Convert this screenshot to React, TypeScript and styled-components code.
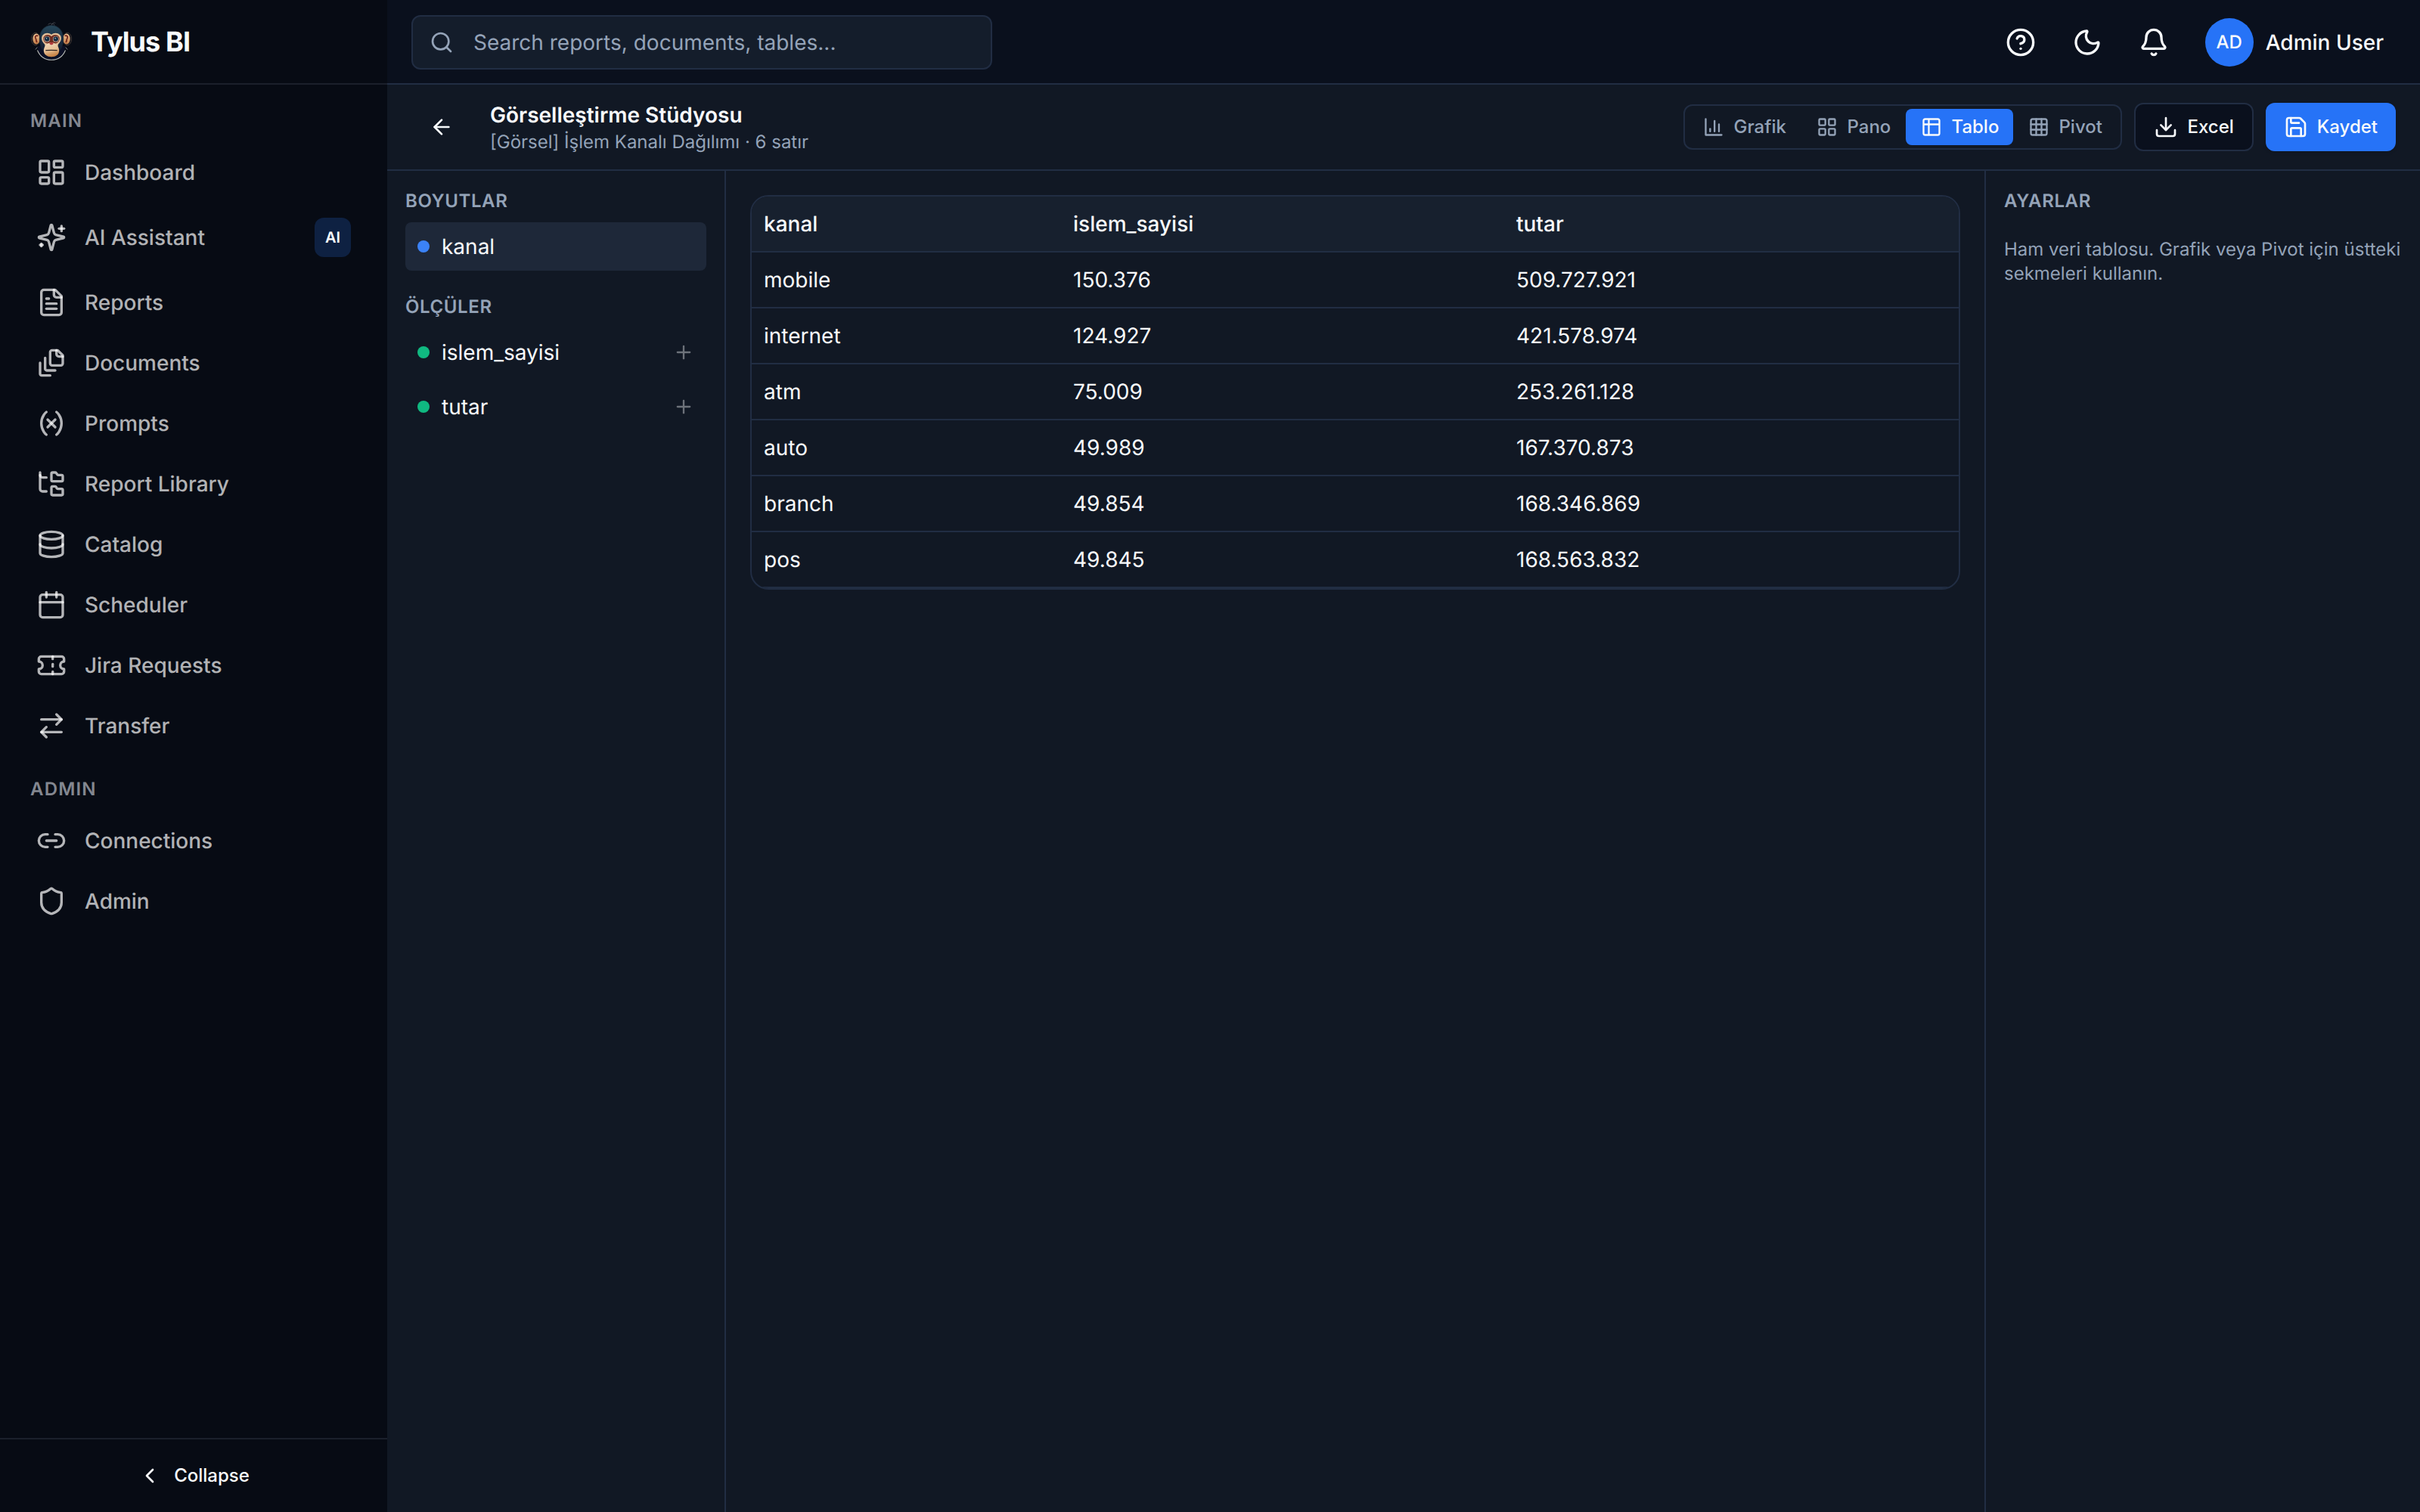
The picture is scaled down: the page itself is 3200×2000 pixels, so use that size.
import React from "react";
import styled, { createGlobalStyle, css } from "styled-components";
import {
  LayoutDashboard, Variable, FolderTree, Database, Calendar,
  Ticket, ArrowRightLeft, Link2, Shield, ChevronLeft, Search, CircleHelp, Moon, Bell,
  ArrowLeft, LayoutGrid, Table2, Grid3x3, Download, Save, Plus,
} from "lucide-react";

const c = {
  side: "#070b14",
  head: "#0a101d",
  main: "#111824",
  border: "#212d43",
  muted: "#94a3b8",
  text: "#f8fafc",
  blue: "#2673f7",
};

const Global = createGlobalStyle`
  *, *::before, *::after { box-sizing: border-box; }
  body { margin: 0; background: ${c.main}; color: ${c.text}; font: 400 28px/40px Inter, "Noto Sans", sans-serif; -webkit-font-smoothing: antialiased; text-rendering: geometricPrecision; }
  svg { flex-shrink: 0; display: block; }
  button { font: inherit; color: inherit; border: 0; background: none; padding: 0; }
`;

const Shell = styled.div`display: flex; width: 3200px; height: 2000px; overflow: hidden; background: ${c.main};`;

const Sidebar = styled.aside`
  width: 512px; flex-shrink: 0; display: flex; flex-direction: column; background: ${c.side};
`;
const Brand = styled.div`
  height: 112px; padding: 0 40px; display: flex; align-items: center; gap: 24px;
  border-bottom: 2px solid #1b202b;
`;
const BrandName = styled.span`font-size: 36px; font-weight: 700; letter-spacing: -0.025em; line-height: 56px;`;
const Nav = styled.nav`flex: 1; padding: 24px 16px 0;`;
const NavLabel = styled.div<{ $later?: boolean }>`
  padding: 0 24px; margin: ${(p) => (p.$later ? "28px 0 12px" : "8px 0 12px")};
  font-size: 24px; line-height: 32px; font-weight: 600; letter-spacing: 0.05em; color: #838790;
`;
const NavItem = styled.a`
  display: flex; align-items: center; gap: 24px; padding: 20px 32px; font-weight: 500; color: rgba(255,255,255,0.7);
`;
const NavBadge = styled.span`
  margin-left: auto; width: 48px; height: 52px; border-radius: 12px; background: #0e2142; color: ${c.text};
  display: grid; place-items: center; font-size: 20px; font-weight: 600;
`;
const Collapse = styled.button`
  height: 98px; border-top: 2px solid #1b202b; display: flex; align-items: center; justify-content: center; gap: 16px;
  font-size: 24px; font-weight: 500;
`;

const Content = styled.div`flex: 1; min-width: 0; display: flex; flex-direction: column;`;
const TopBar = styled.header`
  height: 112px; padding: 2px 48px 0 32px; display: flex; align-items: center; justify-content: space-between;
  background: ${c.head}; border-bottom: 2px solid ${c.border};
`;
const SearchBox = styled.div`
  width: 768px; height: 72px; padding: 0 22px; display: flex; align-items: center; gap: 26px;
  border: 2px solid ${c.border}; border-radius: 12px; background: #141d2b; color: ${c.muted};
`;
const Actions = styled.div`display: flex; align-items: center; gap: 48px;`;
const User = styled.div`display: flex; align-items: center; gap: 16px; font-weight: 500;`;
const Avatar = styled.span`
  width: 64px; height: 64px; border-radius: 50%; background: ${c.blue}; display: grid; place-items: center; font-size: 24px;
`;

const StudioBar = styled.div`
  height: 114px; padding: 0 32px; display: flex; align-items: center; border-bottom: 2px solid ${c.border};
`;
const Back = styled.button`width: 80px; height: 64px; display: grid; place-items: center; margin-right: 24px;`;
const Titles = styled.div`flex: 1; padding-top: 2px;`;
const Title = styled.h1`margin: 0 0 1px; font-size: 28px; line-height: 36px; font-weight: 600;`;
const Subtitle = styled.p`margin: 0; font-size: 24px; line-height: 33px; color: ${c.muted};`;
const Segmented = styled.div`
  display: flex; padding: 4px; border: 2px solid ${c.border}; border-radius: 12px;
`;
const Segment = styled.button<{ $active?: boolean; $width: number }>`
  width: ${(p) => p.$width}px; height: 48px; padding-left: 20px; display: flex; align-items: center; gap: 12px;
  border-radius: 8px; font-size: 24px; font-weight: 500; color: ${c.muted};
  ${(p) => p.$active && css`background: ${c.blue}; color: ${c.text};`}
`;
const Button = styled.button<{ $primary?: boolean }>`
  height: 64px; margin-left: 16px; padding: 0 24px; display: flex; align-items: center; gap: 12px; border-radius: 12px;
  font-size: 24px; font-weight: 500; border: 2px solid ${c.border}; background: ${c.head};
  ${(p) => p.$primary && css`border: 0; background: ${c.blue}; box-shadow: 0 2px 4px rgba(0,0,0,0.12);`}
`;

const Workspace = styled.div`flex: 1; display: flex; min-height: 0;`;
const Fields = styled.section`width: 448px; padding: 24px; border-right: 2px solid ${c.border};`;
const PanelLabel = styled.h2`
  margin: 0; font-size: 24px; line-height: 32px; font-weight: 600; letter-spacing: 0.025em; color: ${c.muted};
`;
const FieldGroup = styled.div`display: grid; gap: 8px; margin: 12px 0 32px;`;
const Field = styled.div<{ $used?: boolean }>`
  height: 64px; padding: 0 16px; border-radius: 8px; display: flex; align-items: center; gap: 16px;
  background: ${(p) => (p.$used ? "#1e2839" : "transparent")};
  svg { margin-left: auto; opacity: 0.4; }
`;
const Dot = styled.span<{ $color: string }>`width: 16px; height: 16px; border-radius: 50%; background: ${(p) => p.$color};`;

const Stage = styled.main`flex: 1; padding: 32px;`;
const TableCard = styled.div`border: 2px solid ${c.border}; border-radius: 24px; overflow: hidden;`;
const Table = styled.table`width: 100%; border-collapse: separate; border-spacing: 0; table-layout: fixed;`;
const Col = styled.col<{ $width?: number }>`width: ${(p) => (p.$width ? `${p.$width}px` : "auto")};`;
const Th = styled.th`
  height: 74px; padding: 0 16px; text-align: left; font-weight: 500; background: #17202e; border-bottom: 2px solid ${c.border};
`;
const Td = styled.td`height: 74px; padding: 0 16px; border-bottom: 2px solid ${c.border};`;

const Settings = styled.section`width: 576px; padding: 24px; border-left: 2px solid ${c.border};`;
const Hint = styled.p`margin: 32px 0 0; font-size: 24px; line-height: 32px; color: ${c.muted}; white-space: nowrap;`;

const Logo = () => (
  <svg width="56" height="56" viewBox="0 0 56 56">
    <defs>
      <linearGradient id="ear" x1="0" y1="0" x2="0" y2="1"><stop offset="0" stopColor="#eec294" /><stop offset="1" stopColor="#c07a45" /></linearGradient>
      <linearGradient id="muzzle" x1="0" y1="0" x2="0.3" y2="1"><stop offset="0" stopColor="#f3dfc4" /><stop offset="0.6" stopColor="#e6c096" /><stop offset="1" stopColor="#c98548" /></linearGradient>
      <linearGradient id="fur" x1="0" y1="0" x2="0" y2="1"><stop offset="0" stopColor="#27485b" /><stop offset="1" stopColor="#10182c" /></linearGradient>
    </defs>
    <path d="M10 34C10 46 18 52 28 52S46 46 46 34Z" fill="#0b1026" />
    <path d="M6.800 38.500l2.500-3M49.200 38.500l-2.500-3" fill="none" stroke="#8b8f90" strokeWidth="0.9" />
    <path d="M9.500 39.500C13 48 20 52.300 28 52.300S43 48 46.500 39.500" fill="none" stroke="#b9bcb8" strokeWidth="1.1" />
    <ellipse cx="7" cy="24.500" rx="5.600" ry="8.300" fill="#12141c" stroke="#54463e" strokeWidth="0.7" />
    <ellipse cx="49" cy="24.500" rx="5.600" ry="8.300" fill="#12141c" stroke="#54463e" strokeWidth="0.7" />
    <ellipse cx="8" cy="24.500" rx="4.700" ry="7" fill="url(#ear)" />
    <ellipse cx="48" cy="24.500" rx="4.700" ry="7" fill="url(#ear)" />
    <path d="M10.500 20.500c-3.500-1-4.500 1-3.500 3 1.500 1.500 0 3.500 2 5.500M45.500 20.500c3.500-1 4.500 1 3.500 3-1.500 1.500 0 3.500-2 5.500" fill="none" stroke="#6e2118" strokeWidth="1.700" />
    <path d="M28 6.500C18.500 6.500 12.300 14 12.300 24c0 8 2.700 15 7.700 18h16c5-3 7.700-10 7.700-18C43.700 14 37.500 6.500 28 6.500Z" fill="url(#fur)" stroke="#182432" strokeWidth="0.8" />
    <path d="M23.500 5.500c2-2 4-2 5.500-.2 0-2.300 3-3.300 4.500-1.300M27.500 6.500l2.500-2.500 2.500 2.500" fill="none" stroke="#4a4e56" strokeWidth="0.8" />
    <path d="M28 18.800C25 15.500 18.500 16 16 20c-2 4-.5 8 3 11.500L20 36h16l1-4.500c3.500-3.500 5-7.500 3-11.500C37.500 16 31 15.500 28 18.800Z" fill="#e3bf98" />
    <path d="M28 21.200c-3-3.200-8.300-3-10.300.8-1.500 4 1 8 5.300 8.500h10c4.300-.5 6.800-4.500 5.300-8.500-2-3.800-7.300-4-10.300-.8Z" fill="#6f2c20" />
    <circle cx="22.200" cy="24.700" r="3.900" fill="#c9b09c" /><circle cx="33.800" cy="24.700" r="3.900" fill="#c9b09c" />
    <circle cx="22.200" cy="24.500" r="3.200" fill="#142d43" /><circle cx="33.800" cy="24.500" r="3.200" fill="#142d43" />
    <circle cx="21.500" cy="23.800" r="0.7" fill="#dbe5ea" /><circle cx="33.100" cy="23.800" r="0.7" fill="#dbe5ea" />
    <path d="M28 29c-6.500 1-10.200 6-10.200 11 0 5.200 4.700 8.200 10.200 8.200s10.200-3 10.200-8.200C38.200 35 34.500 30 28 29Z" fill="url(#muzzle)" />
    <path d="M25.300 30c0-1.500 5.400-1.500 5.400 0S29 32.300 28 32.300s-2.700-.8-2.700-2.300Z" fill="#b23a3c" />
    <path d="M20.800 39.700q7.200-.6 14.400 0" fill="none" stroke="#2b211f" strokeWidth="1.200" strokeLinecap="round" />
  </svg>
);

type IconProps = { size: number };
const strokeIcon = (...paths: string[]) => ({ size }: IconProps) => (
  <svg width={size} height={size} viewBox="0 0 24 24" fill="none" stroke="currentColor" strokeWidth="2" strokeLinecap="round" strokeLinejoin="round">
    {paths.map((d) => <path key={d} d={d} />)}
  </svg>
);
const SparkleStar = strokeIcon(
  "M9.937 15.5A2 2 0 0 0 8.5 14.063l-6.135-1.582a.5.5 0 0 1 0-.962L8.5 9.936A2 2 0 0 0 9.937 8.5l1.582-6.135a.5.5 0 0 1 .963 0L14.063 8.5A2 2 0 0 0 15.5 9.937l6.135 1.581a.5.5 0 0 1 0 .964L15.5 14.063a2 2 0 0 0-1.437 1.437l-1.582 6.135a.5.5 0 0 1-.963 0z",
  "M20 3v4", "M22 5h-4", "M4 17v2", "M5 18H3",
);
const ReportFile = strokeIcon(
  "M15 2H6a2 2 0 0 0-2 2v16a2 2 0 0 0 2 2h12a2 2 0 0 0 2-2V7Z", "M14 2v4a2 2 0 0 0 2 2h4", "M10 9H8", "M16 13H8", "M16 17H8",
);
const FileStack = strokeIcon(
  "M21 7h-3a2 2 0 0 1-2-2V2",
  "M21 6v6.5c0 .8-.7 1.5-1.5 1.5h-7c-.8 0-1.5-.7-1.5-1.5v-9c0-.8.7-1.5 1.5-1.5H17Z",
  "M7 8v8.8c0 .3.2.6.4.8.2.2.5.4.8.4H15",
  "M3 12v8.8c0 .3.2.6.4.8.2.2.5.4.8.4H11",
);
const BarChart = strokeIcon("M3 3v18h18", "M18 17V9", "M13 17V5", "M8 17v-3");

const mainNav = [
  { label: "Dashboard", Icon: LayoutDashboard },
  { label: "AI Assistant", Icon: SparkleStar, badge: "AI" },
  { label: "Reports", Icon: ReportFile },
  { label: "Documents", Icon: FileStack },
  { label: "Prompts", Icon: Variable },
  { label: "Report Library", Icon: FolderTree },
  { label: "Catalog", Icon: Database },
  { label: "Scheduler", Icon: Calendar },
  { label: "Jira Requests", Icon: Ticket },
  { label: "Transfer", Icon: ArrowRightLeft },
];
const adminNav = [
  { label: "Connections", Icon: Link2 },
  { label: "Admin", Icon: Shield },
];
const views = [
  { label: "Grafik", Icon: BarChart, width: 150 },
  { label: "Pano", Icon: LayoutGrid, width: 138 },
  { label: "Tablo", Icon: Table2, width: 142, active: true },
  { label: "Pivot", Icon: Grid3x3, width: 138 },
];
const rows = [
  ["mobile", "150.376", "509.727.921"],
  ["internet", "124.927", "421.578.974"],
  ["atm", "75.009", "253.261.128"],
  ["auto", "49.989", "167.370.873"],
  ["branch", "49.854", "168.346.869"],
  ["pos", "49.845", "168.563.832"],
];

export default function App() {
  return (
    <>
      <Global />
      <Shell>
        <Sidebar>
          <Brand><Logo /><BrandName>Tylus BI</BrandName></Brand>
          <Nav>
            <NavLabel>MAIN</NavLabel>
            {mainNav.map(({ label, Icon, badge }) => (
              <NavItem key={label}><Icon size={40} />{label}{badge && <NavBadge>{badge}</NavBadge>}</NavItem>
            ))}
            <NavLabel $later>ADMIN</NavLabel>
            {adminNav.map(({ label, Icon }) => (
              <NavItem key={label}><Icon size={40} />{label}</NavItem>
            ))}
          </Nav>
          <Collapse><ChevronLeft size={32} />Collapse</Collapse>
        </Sidebar>
        <Content>
          <TopBar>
            <SearchBox><Search size={32} />Search reports, documents, tables...</SearchBox>
            <Actions>
              <CircleHelp size={40} /><Moon size={40} /><Bell size={40} />
              <User><Avatar>AD</Avatar>Admin User</User>
            </Actions>
          </TopBar>
          <StudioBar>
            <Back><ArrowLeft size={32} /></Back>
            <Titles>
              <Title>Görselleştirme Stüdyosu</Title>
              <Subtitle>[Görsel] İşlem Kanalı Dağılımı · 6 satır</Subtitle>
            </Titles>
            <Segmented>
              {views.map(({ label, Icon, width, active }) => (
                <Segment key={label} $active={active} $width={width}><Icon size={28} />{label}</Segment>
              ))}
            </Segmented>
            <Button><Download size={32} />Excel</Button>
            <Button $primary><Save size={32} />Kaydet</Button>
          </StudioBar>
          <Workspace>
            <Fields>
              <PanelLabel>BOYUTLAR</PanelLabel>
              <FieldGroup><Field $used><Dot $color="#3b82f6" />kanal</Field></FieldGroup>
              <PanelLabel>ÖLÇÜLER</PanelLabel>
              <FieldGroup>
                <Field><Dot $color="#10b981" />islem_sayisi<Plus size={28} /></Field>
                <Field><Dot $color="#10b981" />tutar<Plus size={28} /></Field>
              </FieldGroup>
            </Fields>
            <Stage>
              <TableCard>
                <Table>
                  <colgroup><Col $width={409} /><Col $width={586} /><Col /></colgroup>
                  <thead><tr><Th>kanal</Th><Th>islem_sayisi</Th><Th>tutar</Th></tr></thead>
                  <tbody>
                    {rows.map((r) => <tr key={r[0]}>{r.map((v) => <Td key={v}>{v}</Td>)}</tr>)}
                  </tbody>
                </Table>
              </TableCard>
            </Stage>
            <Settings>
              <PanelLabel>AYARLAR</PanelLabel>
              <Hint>Ham veri tablosu. Grafik veya Pivot için üstteki<br />sekmeleri kullanın.</Hint>
            </Settings>
          </Workspace>
        </Content>
      </Shell>
    </>
  );
}
